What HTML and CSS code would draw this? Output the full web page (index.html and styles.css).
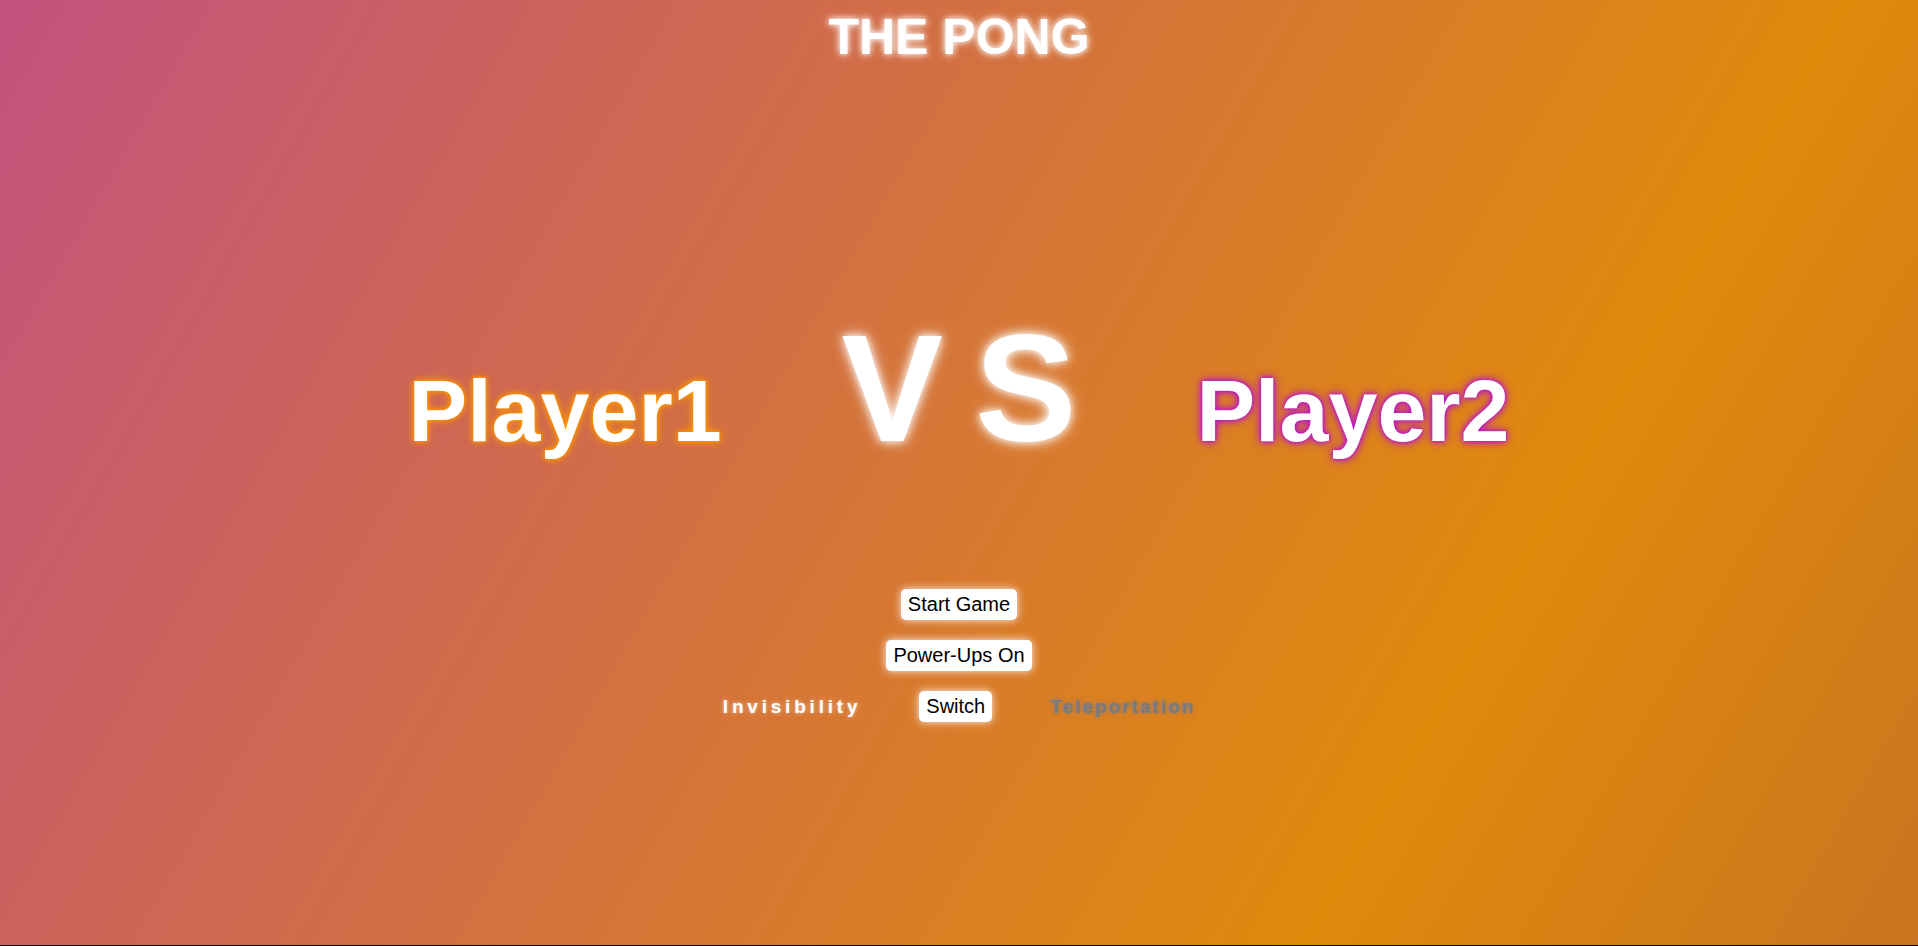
FILE: index.html
```html
<!DOCTYPE html>
<html lang="en">
<head>
<meta charset="utf-8">
<title>The Pong</title>
<link rel="stylesheet" href="styles.css">
</head>
<body>
<main class="screen">
  <h1 class="title">THE PONG</h1>
  <section class="versus">
    <div class="player player-one">Player1</div>
    <div class="vs">VS</div>
    <div class="player player-two">Player2</div>
  </section>
  <section class="controls">
    <button class="btn">Start Game</button>
    <button class="btn">Power-Ups On</button>
    <div class="power-row">
      <span class="power power-active">Invisibility</span>
      <button class="btn">Switch</button>
      <span class="power power-inactive">Teleportation</span>
    </div>
  </section>
</main>
</body>
</html>
```

FILE: styles.css
```css
html, body {
  margin: 0;
  padding: 0;
  background: #000;
  height: 100%;
  overflow: hidden;
}

body {
  font-family: "Liberation Sans", Arial, sans-serif;
}

.screen {
  height: 945px;
  background: linear-gradient(120deg, #c4527f 0%, #e08a0c 75%, #c97420 100%);
  display: flex;
  flex-direction: column;
  align-items: center;
}

.title {
  margin: 8px 0 0;
  font-size: 50px;
  font-weight: 700;
  color: #fff;
  text-shadow: 0 0 6px #fff, 0 0 10px rgba(255, 255, 255, 0.6);
  line-height: normal;
}

.versus {
  margin-top: 235px;
  display: flex;
  align-items: baseline;
  justify-content: center;
  gap: 120px;
  color: #fff;
  font-weight: 700;
}

.player {
  font-size: 88px;
  line-height: normal;
}

.player-one {
  text-shadow: 0 0 3px #ff9800, 0 0 7px #ff9800, 0 0 10px rgba(255, 152, 0, 0.6);
}

.player-two {
  text-shadow: 0 0 3px #b810d0, 0 0 7px #b810d0, 0 0 11px rgba(184, 16, 208, 0.7);
}

.vs {
  font-size: 152px;
  line-height: normal;
  letter-spacing: 32px;
  margin-right: -32px;
  text-shadow: 0 0 8px #fff, 0 0 16px rgba(255, 255, 255, 0.7);
}

.controls {
  margin-top: 113px;
  display: flex;
  flex-direction: column;
  align-items: center;
  gap: 20px;
}

.btn {
  font-family: "Liberation Sans", Arial, sans-serif;
  font-size: 20px;
  line-height: 23px;
  padding: 4px 7px;
  border: none;
  border-radius: 5px;
  background: #fff;
  color: #000;
  box-shadow: 0 0 8px rgba(255, 255, 255, 0.9);
  cursor: pointer;
}

.power-row {
  display: flex;
  align-items: center;
  gap: 58px;
}

.power {
  font-size: 19px;
  font-weight: 700;
}

.power-active {
  color: #fff;
  letter-spacing: 3.8px;
  text-shadow: 0 0 4px rgba(255, 255, 255, 0.6);
}

.power-inactive {
  color: #777a82;
  letter-spacing: 2px;
  text-shadow: 0 0 4px #777a82;
}
```
